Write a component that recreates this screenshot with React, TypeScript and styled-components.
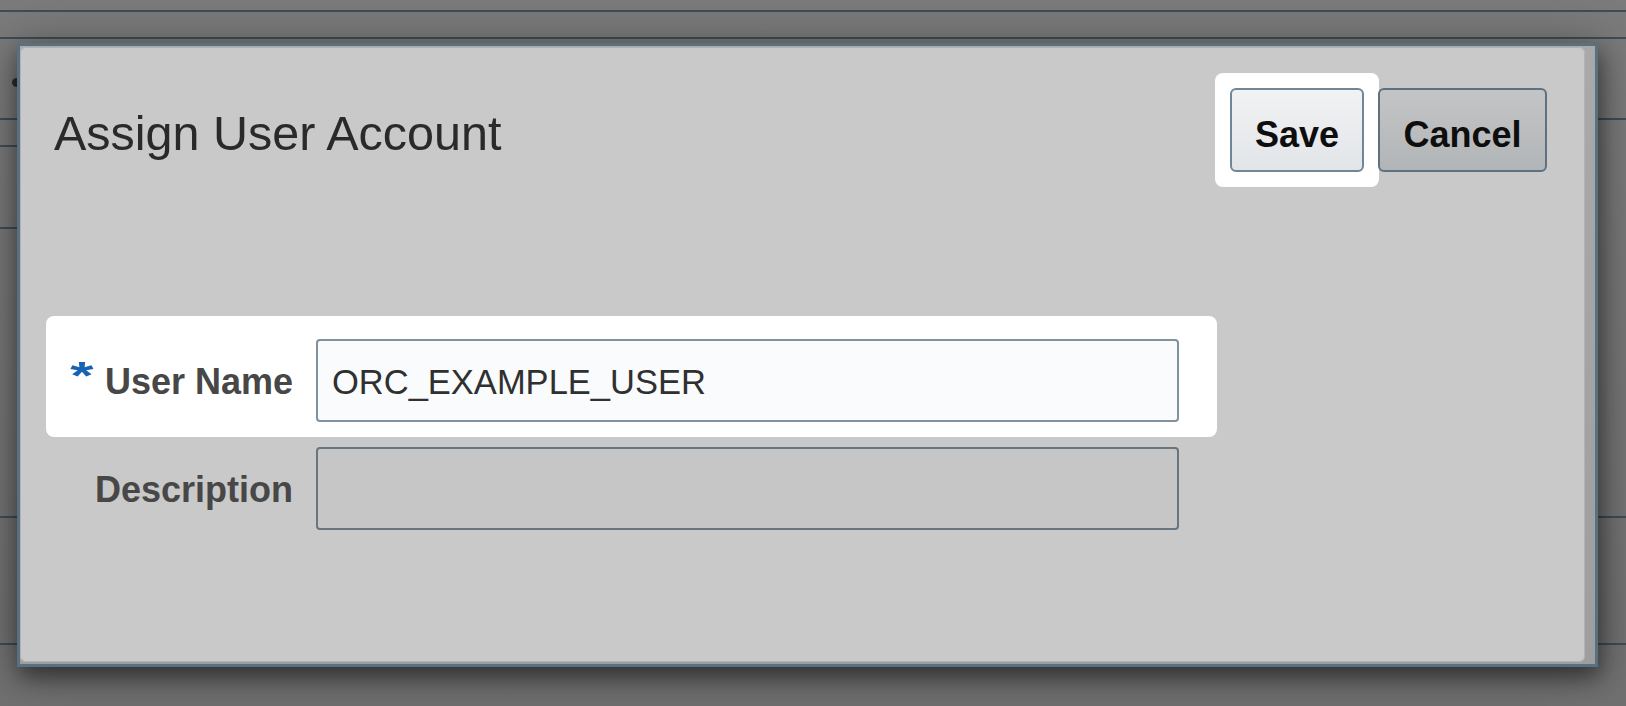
import React from "react";
import styled, { createGlobalStyle } from "styled-components";

const GlobalStyle = createGlobalStyle`
  html, body {
    margin: 0;
    padding: 0;
  }
  body {
    width: 1626px;
    height: 706px;
    overflow: hidden;
    background: #787878;
    font-family: "Liberation Sans", Arial, Helvetica, sans-serif;
  }
`;

const Page = styled.div`
  position: relative;
  width: 1626px;
  height: 706px;
  overflow: hidden;
  background: linear-gradient(180deg, #7b7b7b 0%, #767676 50%, #707070 100%);
`;

const Band = styled.div<{ $h: number; $short?: boolean }>`
  display: flow-root;
  box-sizing: border-box;
  height: ${(p) => p.$h}px;
  width: ${(p) => (p.$short ? "60px" : "100%")};
  border-bottom: 2px solid #414c56;
`;

const Bullet = styled.span`
  display: block;
  width: 10px;
  height: 9px;
  margin: 39px 0 0 12px;
  border-radius: 50%;
  background: #2c2c2c;
`;

const Dialog = styled.div`
  position: absolute;
  left: 17px;
  top: 43px;
  width: 1581px;
  height: 624px;
  box-sizing: border-box;
  display: flex;
  border: 3px solid #587080;
  padding: 1px 10px 2px 0;
  background: linear-gradient(180deg, #a9a9a9 0%, #9e9e9e 100%);
  box-shadow: 2px 10px 20px rgba(0, 0, 0, 0.45), 0 4px 50px rgba(0, 0, 0, 0.3);
`;

const Panel = styled.div`
  flex: 1;
  display: flex;
  flex-direction: column;
  padding: 26px 38px 0 26px;
  background: #c9c9c9;
  border-radius: 6px;
  box-shadow: inset 0 0 0 1px #b2b2b2;
`;

const Header = styled.div`
  display: flex;
  align-items: center;
  justify-content: space-between;
  padding-left: 8px;
`;

const Title = styled.h1`
  margin: 0;
  padding-top: 6px;
  font-size: 48.5px;
  font-weight: 400;
  line-height: 1;
  color: #2a2a2a;
`;

const Actions = styled.div`
  display: flex;
  align-items: center;
`;

const Spotlight = styled.div`
  padding: 15px;
  background: #ffffff;
  border-radius: 8px;
`;

const Button = styled.button<{ $primary?: boolean; $w: number }>`
  width: ${(p) => p.$w}px;
  height: 84px;
  box-sizing: border-box;
  margin: 0 0 0 ${(p) => (p.$primary ? "0" : "-1px")};
  padding: 10px 0 0;
  border: 2px solid ${(p) => (p.$primary ? "#6f8799" : "#5e7181")};
  border-radius: 6px;
  background: ${(p) =>
    p.$primary
      ? "linear-gradient(180deg, #f1f2f4 0%, #e2e5e8 100%)"
      : "linear-gradient(180deg, #c3c4c6 0%, #b2b5b7 100%)"};
  font-family: "Liberation Sans", Arial, Helvetica, sans-serif;
  font-size: 36px;
  font-weight: 700;
  line-height: 1;
  color: #0e0e0e;
  cursor: pointer;
`;

const Form = styled.div`
  display: flex;
  flex-direction: column;
  align-items: flex-start;
  gap: 10px;
  margin-top: 129px;
`;

const FieldRow = styled.div<{ $spot?: boolean }>`
  display: grid;
  grid-template-columns: 247px 863px;
  column-gap: 23px;
  align-items: center;
  padding: ${(p) => (p.$spot ? "23px 38px 15px 0" : "0")};
  background: ${(p) => (p.$spot ? "#ffffff" : "transparent")};
  border-radius: 8px;
`;

const Label = styled.label`
  padding-top: 2px;
  text-align: right;
  white-space: nowrap;
  font-size: 36px;
  font-weight: 700;
  line-height: 1;
  color: #474747;
`;

const Required = styled.span`
  display: inline-block;
  font-size: 46px;
  font-weight: 700;
  line-height: 0;
  color: #1663b3;
  margin-right: 14px;
  vertical-align: 3px;
  transform: scale(1.3, 0.85);
`;

const Input = styled.input<{ $filled?: boolean }>`
  width: 100%;
  height: 83px;
  box-sizing: border-box;
  margin: 0;
  padding: 3px 14px 0;
  border: 2px solid ${(p) => (p.$filled ? "#7f929e" : "#66757f")};
  border-radius: 4px;
  background: ${(p) => (p.$filled ? "#f9fbfd" : "#c6c6c6")};
  font-family: "Liberation Sans", Arial, Helvetica, sans-serif;
  font-size: 34.5px;
  color: #303030;
  outline: none;
`;

export default function App() {
  return (
    <>
      <GlobalStyle />
      <Page>
        <Band $h={12} />
        <Band $h={27} />
        <Band $h={81}>
          <Bullet />
        </Band>
        <Band $h={27} $short />
        <Band $h={82} $short />
        <Band $h={289} />
        <Band $h={127} />

        <Dialog role="dialog" aria-label="Assign User Account">
          <Panel>
            <Header>
              <Title>Assign User Account</Title>
              <Actions>
                <Spotlight>
                  <Button $primary $w={134}>
                    Save
                  </Button>
                </Spotlight>
                <Button $w={169}>Cancel</Button>
              </Actions>
            </Header>

            <Form>
              <FieldRow $spot>
                <Label htmlFor="userName">
                  <Required>*</Required>User Name
                </Label>
                <Input id="userName" $filled defaultValue="ORC_EXAMPLE_USER" />
              </FieldRow>
              <FieldRow>
                <Label htmlFor="description">Description</Label>
                <Input id="description" defaultValue="" />
              </FieldRow>
            </Form>
          </Panel>
        </Dialog>
      </Page>
    </>
  );
}
